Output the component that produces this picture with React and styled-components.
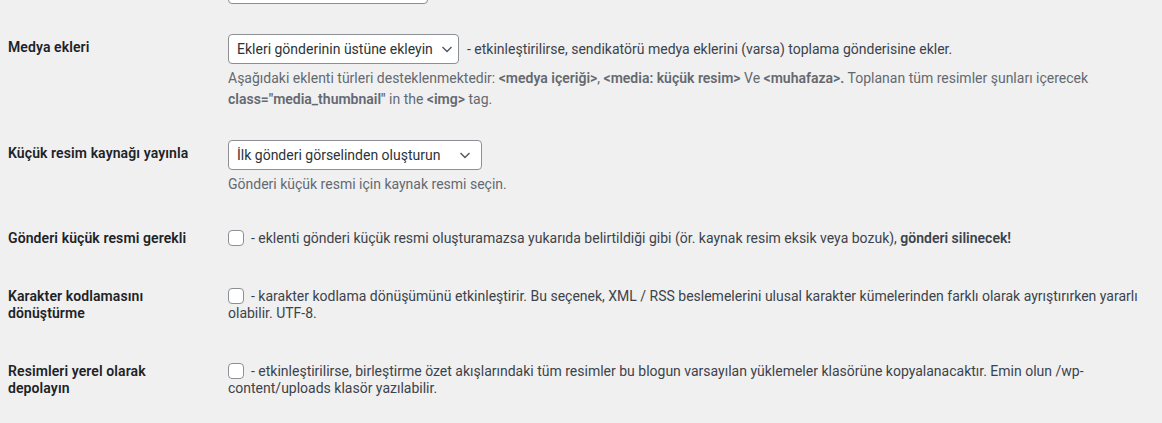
import React from 'react';
import styled, { createGlobalStyle } from 'styled-components';

const GlobalStyle = createGlobalStyle`
  html, body {
    margin: 0;
    padding: 0;
    background: #f0f0f1;
  }
  body {
    font-family: Roboto, "Liberation Sans", sans-serif;
    color: #3c434a;
    font-size: 14px;
    overflow: hidden;
  }
`;

export const StyledWrap = styled.div`
  padding: 0 12px 0 8px;
  margin-top: -41px;
`;

export const StyledTable = styled.table`
  width: 100%;
  border-collapse: collapse;
  table-layout: fixed;
`;

export const StyledLabel = styled.th`
  width: 200px;
  padding: 20px 10px 20px 0;
  text-align: left;
  vertical-align: top;
  font-size: 14px;
  font-weight: 600;
  line-height: 17.6px;
  letter-spacing: 0.1px;
  color: #1d2327;
`;

export const StyledCell = styled.td`
  padding: ${p => (p.$check ? '20px 10px 15px' : '15px 10px')};
  vertical-align: top;
  line-height: ${p => (p.$check ? '17.6px' : '19px')};
  font-size: 14px;
  color: #3c434a;
`;

export const StyledInline = styled.div`
  display: flex;
  align-items: center;
  gap: 8px;
`;

export const StyledSelect = styled.div`
  box-sizing: border-box;
  display: flex;
  align-items: center;
  justify-content: space-between;
  height: 30px;
  width: ${p => p.$width}px;
  padding: 0 8px;
  background: #fff;
  border: 1px solid #8c8f94;
  border-radius: 4px;
  font-size: 14px;
  color: #2c3338;
  white-space: nowrap;
  flex-shrink: 0;
`;

export const StyledChevron = styled.svg`
  width: 16px;
  height: 16px;
  flex-shrink: 0;
  margin-left: 6px;
`;

export const StyledDescription = styled.p`
  margin: 4px 0 0;
  font-size: 14px;
  line-height: 21px;
  color: #646970;

  b {
    font-weight: 600;
  }
`;

export const StyledCheckbox = styled.span`
  box-sizing: border-box;
  display: inline-block;
  width: 16px;
  height: 16px;
  margin: 0 7px -3px 0;
  background: #fff;
  border: 1px solid #8c8f94;
  border-radius: 4px;
  vertical-align: baseline;
`;

export const StyledStrong = styled.b`
  font-weight: 600;
`;

const Chevron = () => (
  <StyledChevron viewBox="0 0 16 16" fill="none">
    <path d="M3.5 6 L8 10.5 L12.5 6" stroke="#50575e" strokeWidth="1.4" />
  </StyledChevron>
);

const Select = ({ value, width }) => (
  <StyledSelect $width={width}>
    <span>{value}</span>
    <Chevron />
  </StyledSelect>
);

const App = () => (
  <>
    <GlobalStyle />
    <StyledWrap>
      <StyledTable>
        <tbody>
          <tr>
            <StyledLabel>&nbsp;</StyledLabel>
            <StyledCell>
              <StyledSelect $width={200} />
            </StyledCell>
          </tr>

          <tr>
            <StyledLabel>Medya ekleri</StyledLabel>
            <StyledCell>
              <StyledInline>
                <Select value="Ekleri gönderinin üstüne ekleyin" width={231} />
                <span>- etkinleştirilirse, sendikatörü medya eklerini (varsa) toplama gönderisine ekler.</span>
              </StyledInline>
              <StyledDescription>
                Aşağıdaki eklenti türleri desteklenmektedir: <b>&lt;medya içeriği&gt;</b>,{' '}
                <b>&lt;media: küçük resim&gt;</b> Ve <b>&lt;muhafaza&gt;.</b> Toplanan tüm resimler şunları içerecek{' '}
                <b>class="media_thumbnail"</b> in the <b>&lt;img&gt;</b> tag.
              </StyledDescription>
            </StyledCell>
          </tr>

          <tr>
            <StyledLabel>Küçük resim kaynağı yayınla</StyledLabel>
            <StyledCell>
              <Select value="İlk gönderi görselinden oluşturun" width={254} />
              <StyledDescription>Gönderi küçük resmi için kaynak resmi seçin.</StyledDescription>
            </StyledCell>
          </tr>

          <tr>
            <StyledLabel>Gönderi küçük resmi gerekli</StyledLabel>
            <StyledCell $check>
              <StyledCheckbox />
              - eklenti gönderi küçük resmi oluşturamazsa yukarıda belirtildiği gibi (ör. kaynak resim eksik veya bozuk),{' '}
              <StyledStrong>gönderi silinecek!</StyledStrong>
            </StyledCell>
          </tr>

          <tr>
            <StyledLabel>Karakter kodlamasını dönüştürme</StyledLabel>
            <StyledCell $check>
              <StyledCheckbox />
              - karakter kodlama dönüşümünü etkinleştirir. Bu seçenek, XML / RSS beslemelerini ulusal karakter kümelerinden farklı olarak ayrıştırırken yararlı olabilir. UTF-8.
            </StyledCell>
          </tr>

          <tr>
            <StyledLabel>Resimleri yerel olarak depolayın</StyledLabel>
            <StyledCell $check>
              <StyledCheckbox />
              - etkinleştirilirse, birleştirme özet akışlarındaki tüm resimler bu blogun varsayılan yüklemeler klasörüne kopyalanacaktır. Emin olun /wp-content/uploads klasör yazılabilir.
            </StyledCell>
          </tr>
        </tbody>
      </StyledTable>
    </StyledWrap>
  </>
);

export default App;
